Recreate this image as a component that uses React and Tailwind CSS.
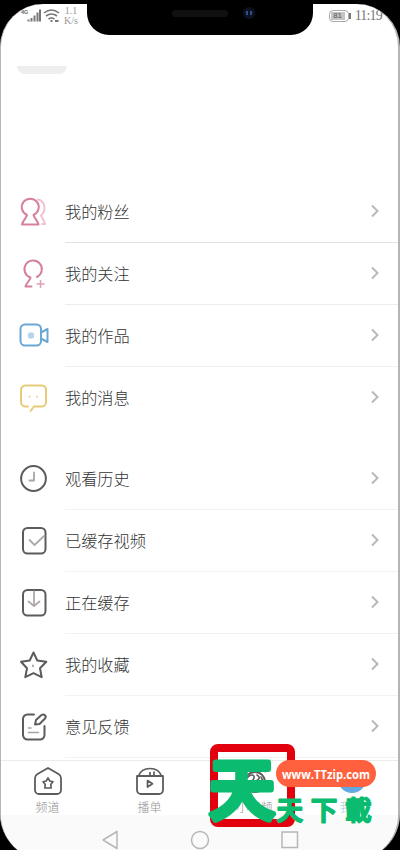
import clsx from "clsx";

const pink = "#d58199";
const dark = "#5c5c5c";

function Icon({ children, color = dark, className = "-ml-px mb-0.5 mr-px size-8" }) {
  return (
    <svg
      viewBox="0 0 32 32"
      fill="none"
      stroke={color}
      strokeWidth="2"
      strokeLinecap="round"
      strokeLinejoin="round"
      className={clsx("shrink-0 overflow-visible", className)}
    >
      {children}
    </svg>
  );
}

const FansIcon = () => (
  <Icon color={pink}>
    <path d="M22 4.500c8 2 8 12 3 16 1 3 3 4 4 8.500h-3" stroke="#efc3cf" />
    <path d="M11 20a8.500 8.500 0 1 1 6.500 0c1 4 4 5 5 9.500H6c1-4.500 4-5.500 5-9.500Z" />
  </Icon>
);

const FollowIcon = () => (
  <Icon color={pink}>
    <path d="M15.500 29.500H9.500c1-4 4-5 5-9a8.700 8.700 0 1 1 6.500-.500" />
    <path d="M24.500 23.500v7M21 27h7" strokeWidth="1.500" stroke="#e0a0b2" />
  </Icon>
);

const VideoIcon = () => (
  <Icon color="#6aa8d4">
    <rect x="4.500" y="5.500" width="20.500" height="21" rx="4.500" />
    <path d="m26 13 5.500-3v13L26 20" />
    <circle cx="15" cy="16.500" r="3.200" fill="#b5d5ee" stroke="none" />
  </Icon>
);

const MessageIcon = () => (
  <Icon color="#e8cb78">
    <path d="M12 25.500H9.500a4.500 4.500 0 0 1-4.500-4.500V9a4.500 4.500 0 0 1 4.500-4.500H26A4.500 4.500 0 0 1 30 9v12a4.500 4.500 0 0 1-4.500 4.500H18L14.500 30" />
    <path d="M13.500 15.500v.2M21 15.500v.2" stroke="#eed9a0" />
  </Icon>
);

const ClockIcon = () => (
  <Icon>
    <circle cx="17.500" cy="16.500" r="12.400" />
    <path d="M18 10.500v8h-4.500" stroke="#a5a5a5" strokeWidth="1.800" />
  </Icon>
);

const CachedIcon = () => (
  <Icon>
    <rect x="7" y="4" width="22.500" height="25.500" rx="4.500" />
    <path d="m13.500 16 5 5 9.500-9" stroke="#aaa" strokeWidth="1.800" />
  </Icon>
);

const CachingIcon = () => (
  <Icon>
    <rect x="7" y="4" width="22.500" height="25.500" rx="4.500" />
    <path d="M18 5.500v14M12.500 15.500l5.500 4.500 5.500-4.500" stroke="#b0a8ac" strokeWidth="1.800" />
  </Icon>
);

const StarIcon = () => (
  <Icon>
    <path d="m17.500 4.500 3.800 8 9 1.200-6.300 6.500 1.700 9-8.200-4-8.200 4 1.700-9L5 13.700l8.700-1.200Z" />
    <path d="M17 17.500v.8" stroke="#aaa" />
  </Icon>
);

const FeedbackIcon = () => (
  <Icon>
    <path d="M18 4.500h-6.500A4.500 4.500 0 0 0 7 9v16a4.500 4.500 0 0 0 4.500 4.500H24a4.500 4.500 0 0 0 4.500-4.500v-9" />
    <path d="m19 14.500 1-4.500 5.500-5c2.500-1.500 5.500 1 3.500 3.500L23.500 14Z" />
    <path d="M12.500 18h2.500M12.500 22.500h10" stroke="#a5a5a5" strokeWidth="1.500" />
  </Icon>
);

const socialItems = [
  { label: "我的粉丝", icon: FansIcon, line: "border-[#e2e2e2]" },
  { label: "我的关注", icon: FollowIcon, line: "border-[#ececec]" },
  { label: "我的作品", icon: VideoIcon, line: "border-[#f0f0f0]" },
  { label: "我的消息", icon: MessageIcon, line: "border-transparent" },
];

const toolItems = [
  { label: "观看历史", icon: ClockIcon, line: "border-[#f2f2f2]" },
  { label: "已缓存视频", icon: CachedIcon, line: "border-[#f2f2f2]" },
  { label: "正在缓存", icon: CachingIcon, line: "border-[#f2f2f2]" },
  { label: "我的收藏", icon: StarIcon, line: "border-[#f2f2f2]" },
  { label: "意见反馈", icon: FeedbackIcon, line: "border-[#f2f2f2]" },
];

function MenuRow({ item }) {
  const ItemIcon = item.icon;
  return (
    <li className="flex h-[62px] items-center pl-4">
      <ItemIcon />
      <div className={clsx("ml-4 flex h-full flex-1 items-center justify-between border-b pr-[18px] pb-px", item.line)}>
        <span className="text-[16.200px] font-light text-[#333]">{item.label}</span>
        <svg viewBox="0 0 10 14" fill="none" stroke="#b9b9b9" strokeWidth="2" className="h-3.5 w-2.5">
          <path d="m2 1.500 5.500 5.500L2 12.500" />
        </svg>
      </div>
    </li>
  );
}

function StatusBar() {
  return (
    <div className="relative flex h-[31px] justify-between">
      <div className="flex pt-1 pl-[19px]">
        <svg viewBox="0 0 40 16" className="h-4 w-10 overflow-visible" fill="none" stroke="#777">
          <path d="M8.500 13.500v-2M11.500 13.500V10M14.500 13.500V7.500M17.500 13.500V4.500M20 13.500V1.500" strokeWidth="2" />
          <path d="M24 5q7.500-6 15 0M26 8q5.500-4 11 0M28.500 11q3-2 6 0" strokeWidth="1.600" />
          <path d="M30.500 13h2M35 13h3.500" strokeWidth="2" />
          <text x="1" y="6" fontSize="5.500" fontWeight="bold" fill="#666" stroke="none" fontFamily="Liberation Sans">4G</text>
        </svg>
        <div className="-mt-0.5 ml-1 flex flex-col items-center font-['Liberation_Serif',serif] text-[10px] leading-[10px] text-[#999]">
          <span>1.1</span>
          <span>K/s</span>
        </div>
      </div>
      <div className="flex items-start pt-[5px] pr-[16px]">
        <div className="mt-px flex h-3 w-5 items-center rounded-sm border border-[#aaa] p-px">
          <span className="flex h-full w-[14px] items-center justify-center bg-[#c4c4c4] font-['Liberation_Sans',sans-serif] text-[8px] text-[#555]">
            81
          </span>
        </div>
        <span className="mt-1 h-1.5 w-0.5 bg-[#777]" />
        <span className="ml-1 font-['Liberation_Serif',serif] text-[14px] leading-[14px] tracking-[-0.800px] text-[#777]">
          11:19
        </span>
      </div>
      {/* notch */}
      <div className="absolute top-0 left-[86px] h-[31px] w-[226px] rounded-b-[22px] bg-black">
        <span className="absolute top-[6px] left-[85px] h-[7px] w-14 rounded-full bg-[#101010]" />
        <span className="absolute top-[3px] left-[156px] flex size-3 items-center justify-center gap-0.5 rounded-full bg-[#0b1120]">
          <i className="h-1 w-0.5 bg-[#2c5288]" />
          <i className="h-1 w-0.5 bg-[#2c5288]" />
        </span>
      </div>
    </div>
  );
}

function TabBar() {
  return (
    <nav className="grid h-[55px] grid-cols-4 border-t border-[#ebebeb] pr-px text-[12px] leading-4 font-light text-[#929292]">
      <div className="flex flex-col items-center pt-1 pr-1.5">
        <Icon className="h-8 w-8">
          <path d="m16 3 10.500 6q2.500 1.500 2.500 4v12a4 4 0 0 1-4 4H7a4 4 0 0 1-4-4V13q0-2.500 2.500-4Z" strokeWidth="1.800" />
          <path d="m16 13 1.800 3 3.200.8-2.200 2.400.3 3.800h-6.200l.3-3.800-2.200-2.400 3.200-.8Z" strokeWidth="1.700" />
        </Icon>
        <span className="mt-0.5">频道</span>
      </div>
      <div className="flex flex-col items-center pt-1">
        <Icon className="h-8 w-8">
          <path d="M3 11h26v14a4 4 0 0 1-4 4H7a4 4 0 0 1-4-4Z" strokeWidth="1.800" />
          <path d="M4.500 11C8 1 24 1 27.500 11M16 7.500V10M20 7v3" strokeWidth="1.700" />
          <path d="m13.500 15.500 5 3.200-5 3.300Z" strokeWidth="1.700" />
        </Icon>
        <span className="mt-0.5">播单</span>
      </div>
      <div className="flex flex-col items-center pt-1 pl-3">
        <Icon className="h-8 w-8">
          <circle cx="16" cy="17" r="10" strokeWidth="1.800" />
          <path d="M8 13c4-5 8-3 7 0s-3 3-3 3M18 10q5 3-1 6M16 17c7-3 8 4 1 4M22 12q3 4 0 10M17 21v5" strokeWidth="1.600" />
          <circle cx="26.500" cy="5.500" r="2" fill="#d76b85" stroke="none" />
        </Icon>
        <span className="mt-0.5">小视频</span>
      </div>
      <div className="flex flex-col items-center pt-1 pl-2 text-[#a5c9e8]">
        <span className="size-7 rounded-full bg-[#62a9e4]" />
        <span className="mt-1.5">我的</span>
      </div>
    </nav>
  );
}

function SystemNav() {
  return (
    <div className="h-[47px] bg-[#fafafa]">
      <svg viewBox="0 0 397 47" className="h-[47px] w-full" fill="none" stroke="#b7b7b7" strokeWidth="1.500">
        <path d="m102 25 14-8.500v17Z" strokeLinejoin="round" />
        <circle cx="199" cy="25" r="8.500" />
        <rect x="281" y="17" width="15.500" height="15.500" />
      </svg>
    </div>
  );
}

function Watermark() {
  return (
    <div className="absolute top-[744px] left-[206px] h-[84px] w-[172px]">
      <div className="ml-1 h-[83px] w-[85px] rounded-lg border-8 border-[#e2000f]" />
      <svg
        viewBox="0 0 172 84"
        className="absolute inset-0 h-[84px] w-[172px] overflow-visible"
        fontFamily="Noto Sans CJK SC, sans-serif"
        fill="#0bbc70"
        stroke="#0bbc70"
        strokeLinejoin="round"
      >
        <text x="3" y="69.500" fontSize="66" fontWeight="500" strokeWidth="6">天</text>
        <text x="70.500" y="75.500" fontSize="26.500" fontWeight="500" letterSpacing="7.700" strokeWidth="1.900">天下載</text>
        <rect x="70" y="16" width="100" height="27" rx="13.500" fill="#ff603e" stroke="none" />
        <text
          x="76"
          y="34.500"
          fontSize="13"
          fontWeight="700"
          fontFamily="Open Sans, sans-serif"
          fill="#fff"
          stroke="none"
          textLength="88"
          lengthAdjust="spacingAndGlyphs"
        >
          www.TTzip.com
        </text>
      </svg>
    </div>
  );
}

function App() {
  return (
    <div className="relative h-[850px] w-[400px] overflow-hidden bg-black pt-1 font-['Noto_Sans_CJK_SC',sans-serif]">
      <div className="h-[856px] overflow-hidden rounded-t-[43px] rounded-b-[46px] border-x border-r-2 border-[#b5b5b5] bg-white">
        <StatusBar />
        <div className="mt-[31px] ml-4 h-2 w-[50px] rounded-b-[14px] bg-[#eeeeee]" />
        <ul className="mt-[107px]">
          {socialItems.map((item) => (
            <MenuRow key={item.label} item={item} />
          ))}
        </ul>
        <ul className="mt-[19px]">
          {toolItems.map((item) => (
            <MenuRow key={item.label} item={item} />
          ))}
        </ul>
        <div className="mt-0.5">
          <TabBar />
          <SystemNav />
        </div>
      </div>
      <Watermark />
    </div>
  );
}

export default App;
